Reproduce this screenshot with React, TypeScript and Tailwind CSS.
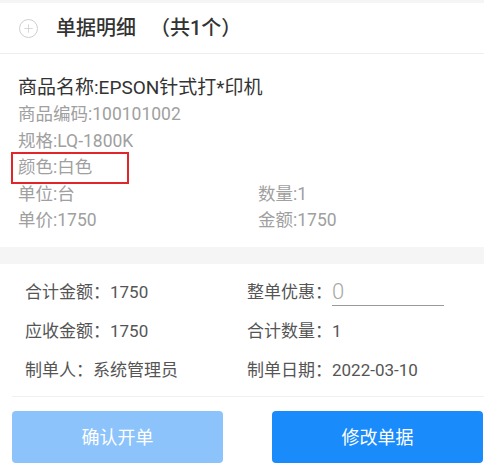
import { Plus } from "lucide-react";

const font = { fontFamily: 'Roboto, "Noto Sans CJK SC", "Noto Sans", sans-serif' };

function InfoRow({ label, value }: { label: string; value: string }) {
  return (
    <div className="flex items-center h-[39px]">
      <span className="text-[#555]">{label}：</span>
      <span className="text-[#555]">{value}</span>
    </div>
  );
}

export default function App() {
  return (
    <div className="w-[484px] h-[468px] bg-white overflow-hidden" style={font}>
      <div className="h-[3px] bg-[#f5f5f5]" />

      <div className="flex items-center h-[51px] border-b border-[#eeeeee] px-[19px]">
        <div className="w-[19px] h-[19px] rounded-full border border-[#cfcfcf] flex items-center justify-center">
          <Plus className="w-[13px] h-[13px] text-[#cfcfcf]" strokeWidth={1.5} />
        </div>
        <h1 className="ml-[18px] text-[20px] font-medium text-[#333]">
          单据明细<span className="ml-[14px]">（共1个）</span>
        </h1>
      </div>

      <div className="px-[18px] pt-[21px] pb-[14px] text-[17.5px] text-[#a0a0a0] leading-[26.4px]">
        <div className="text-[19px] text-[#333]">商品名称:EPSON针式打*印机</div>
        <div>商品编码:100101002</div>
        <div>规格:LQ-1800K</div>
        <div className="relative">
          颜色:白色
          <span className="absolute left-[-7px] top-[-2px] w-[118px] h-[32px] border-2 border-[#e0262b]" />
        </div>
        <div className="grid grid-cols-[240px_1fr]">
          <span>单位:台</span>
          <span>数量:1</span>
        </div>
        <div className="grid grid-cols-[240px_1fr]">
          <span>单价:1750</span>
          <span>金额:1750</span>
        </div>
      </div>

      <div className="h-[17px] bg-[#f5f5f5]" />

      <div className="grid grid-cols-[222px_1fr] px-[25px] pt-[9px] pb-[6px] text-[17px]">
        <InfoRow label="合计金额" value="1750" />
        <div className="flex items-center h-[39px]">
          <span className="text-[#555]">整单优惠：</span>
          <span className="w-[112px] border-b border-[#9a9a9a] text-[22px] leading-[26px] text-[#a8a8a8] font-light">
            0
          </span>
        </div>
        <InfoRow label="应收金额" value="1750" />
        <InfoRow label="合计数量" value="1" />
        <InfoRow label="制单人" value="系统管理员" />
        <InfoRow label="制单日期" value="2022-03-10" />
      </div>

      <div className="ml-[12px] border-t border-[#f0f0f0]" />

      <div className="flex justify-between pl-[12px] pr-[1px] pt-[14px]">
        <button className="w-[211px] h-[52px] rounded-[4px] bg-[#8dc3fb] text-white text-[18px]">
          确认开单
        </button>
        <button className="w-[211px] h-[52px] rounded-[4px] bg-[#1a8bfb] text-white text-[18px]">
          修改单据
        </button>
      </div>
    </div>
  );
}
